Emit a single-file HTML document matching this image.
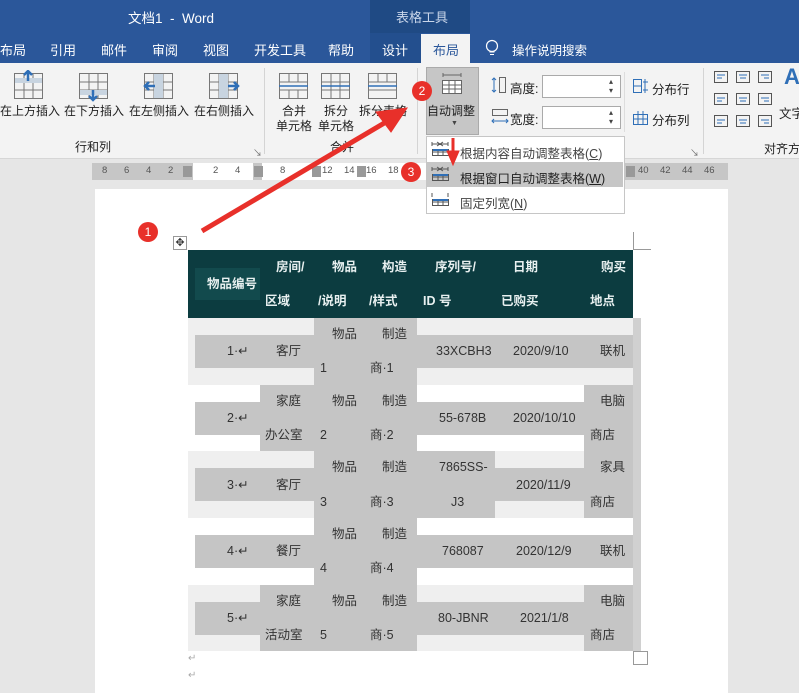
<!DOCTYPE html>
<html><head><meta charset="utf-8"><style>
*{margin:0;padding:0;box-sizing:border-box}
body{width:799px;height:693px;overflow:hidden;position:relative;background:#e6e6e6;font-family:"Liberation Sans","Noto Sans CJK SC",sans-serif;font-size:12px;color:#333}
.a{position:absolute;white-space:nowrap}
.t{font-size:12.5px;color:#333;line-height:16px}
.h{color:#e8f0f0;font-weight:bold;font-size:12.5px;line-height:16px}
.g{background:#c5c5c5}
.w{color:#fff;font-size:13px}
.rb{font-size:12px;color:#222;line-height:15px;text-align:center}
.badge{position:absolute;width:20px;height:20px;border-radius:50%;background:#e8302a;color:#fff;font-size:12px;text-align:center;line-height:20px}
</style></head><body>
<!-- title bar -->
<div class="a" style="left:0;top:0;width:799px;height:63px;background:#2b579a"></div>
<div class="a" style="left:370px;top:0;width:100px;height:33px;background:#1f4a84"></div>
<div class="a w" style="left:128px;top:7px;font-size:13.5px">文档1 &nbsp;-&nbsp; Word</div>
<div class="a w" style="left:396px;top:7px;color:#c9d6ea">表格工具</div>
<div class="a w" style="left:0;top:40px">布局</div>
<div class="a w" style="left:50px;top:40px">引用</div>
<div class="a w" style="left:101px;top:40px">邮件</div>
<div class="a w" style="left:152px;top:40px">审阅</div>
<div class="a w" style="left:203px;top:40px">视图</div>
<div class="a w" style="left:254px;top:40px">开发工具</div>
<div class="a w" style="left:328px;top:40px">帮助</div>
<div class="a" style="left:370px;top:33px;width:51px;height:30px;background:#234f8e"></div>
<div class="a w" style="left:382px;top:40px">设计</div>
<div class="a" style="left:421px;top:34px;width:49px;height:30px;background:#f3f3f3"></div>
<div class="a" style="left:433px;top:40px;color:#2b579a;font-size:13px">布局</div>
<svg class="a" style="left:485px;top:39px" width="14" height="18"><circle cx="7" cy="7" r="5.5" fill="none" stroke="#fff" stroke-width="1.2"/><path d="M4.5 13h5M5 15.5h4" stroke="#fff"/></svg>
<div class="a w" style="left:512px;top:40px;font-size:12.5px">操作说明搜索</div>
<!-- ribbon -->
<div class="a" style="left:0;top:63px;width:799px;height:96px;background:#f3f3f3;border-bottom:1px solid #d6d6d6"></div>
<svg class="a" style="left:0;top:70px" width="799" height="60">
<g fill="none" stroke="#777" stroke-width="1">
<rect x="14.5" y="3.5" width="28" height="25"/><rect x="79.5" y="3.5" width="28" height="25"/><rect x="144.5" y="3.5" width="28" height="25"/><rect x="209.5" y="3.5" width="28" height="25"/>
<path d="M14 12h29M14 20h29M24 4v25M33 4v25M79 12h29M79 20h29M89 4v25M98 4v25M144 12h29M144 20h29M154 4v25M163 4v25M209 12h29M209 20h29M219 4v25M228 4v25"/>
<rect x="279.5" y="3.5" width="28" height="25"/><rect x="321.5" y="3.5" width="28" height="25"/><rect x="368.5" y="3.5" width="28" height="25"/>
<path d="M279 12h29M279 20h29M289 4v8M298 4v8M289 20v9M298 20v9M321 12h29M321 20h29M331 4v25M340 4v25M368 12h29M368 20h29M378 4v8M387 4v8"/>
</g>
<rect x="15" y="8" width="27" height="5" fill="#c8d4e0"/><rect x="80" y="20" width="27" height="5" fill="#c8d4e0"/><rect x="154" y="4" width="9" height="24" fill="#c8d4e0"/><rect x="219" y="4" width="9" height="24" fill="#c8d4e0"/>
<path d="M28 1v10M24 5l4-4 4 4" stroke="#2f6fb7" stroke-width="2.5" fill="none"/><path d="M93 20v10M89 26l4 4 4-4" stroke="#2f6fb7" stroke-width="2.5" fill="none"/>
<path d="M145 16h10M149 12l-4 4 4 4" stroke="#2f6fb7" stroke-width="2.5" fill="none"/><path d="M228 16h10M234 12l4 4-4 4" stroke="#2f6fb7" stroke-width="2.5" fill="none"/>
<path d="M279 16h29M321 16h29M368 16h29" stroke="#2f6fb7" stroke-width="1.5"/>
</svg>
<div class="a rb" style="left:0;top:104px">在上方插入</div>
<div class="a rb" style="left:64px;top:104px">在下方插入</div>
<div class="a rb" style="left:129px;top:104px">在左侧插入</div>
<div class="a rb" style="left:194px;top:104px">在右侧插入</div>
<div class="a rb" style="left:276px;top:104px">合并<br>单元格</div>
<div class="a rb" style="left:318px;top:104px">拆分<br>单元格</div>
<div class="a rb" style="left:359px;top:104px">拆分表格</div>
<div class="a rb" style="left:75px;top:140px">行和列</div>
<div class="a rb" style="left:330px;top:140px">合并</div>
<div class="a" style="left:253px;top:146px;font-size:9px;color:#666">↘</div>
<div class="a" style="left:264px;top:68px;width:1px;height:86px;background:#d4d4d4"></div>
<div class="a" style="left:417px;top:68px;width:1px;height:86px;background:#d4d4d4"></div>
<div class="a" style="left:426px;top:67px;width:53px;height:68px;background:#c6c6c6;border:1px solid #aaa"></div>
<svg class="a" style="left:441px;top:72px" width="22" height="24"><rect x="1.5" y="8.5" width="19" height="13" fill="#fff" stroke="#666"/><path d="M1 13h20M1 17h20M8 9v13M14 9v13M2 3h18M2 1v4M20 1v4" stroke="#666" fill="none"/></svg>
<div class="a rb" style="left:427px;top:104px">自动调整</div>
<div class="a" style="left:451px;top:120px;font-size:7px;color:#444">▼</div>
<svg class="a" style="left:491px;top:76px" width="18" height="18"><path d="M3 2v14M1 4l2-2 2 2M1 14l2 2 2-2" stroke="#2f6fb7" fill="none"/><rect x="8.5" y="1.5" width="6" height="15" fill="none" stroke="#666"/></svg>
<svg class="a" style="left:491px;top:108px" width="18" height="18"><rect x="1.5" y="1.5" width="15" height="6" fill="none" stroke="#666"/><path d="M1 13h16M3 11l-2 2 2 2M15 11l2 2-2 2" stroke="#2f6fb7" fill="none"/></svg>
<div class="a" style="left:510px;top:78px;font-size:12.5px;color:#222">高度:</div>
<div class="a" style="left:510px;top:109px;font-size:12.5px;color:#222">宽度:</div>
<div class="a" style="left:542px;top:75px;width:79px;height:23px;background:#fff;border:1px solid #aaa"></div>
<div class="a" style="left:542px;top:106px;width:79px;height:23px;background:#fff;border:1px solid #aaa"></div>
<div class="a" style="left:609px;top:77px;font-size:8px;line-height:9px;color:#444">▴<br>▾</div>
<div class="a" style="left:609px;top:108px;font-size:8px;line-height:9px;color:#444">▴<br>▾</div>
<div class="a" style="left:624px;top:72px;width:1px;height:60px;background:#ddd"></div>
<svg class="a" style="left:632px;top:78px" width="18" height="16"><path d="M1.5 1.5h8v13h-8zM1 8h9M13 1v14M11 4h5M11 12h5" stroke="#2f6fb7" fill="none"/></svg>
<svg class="a" style="left:632px;top:110px" width="18" height="16"><path d="M1.5 4.5h14v10h-14zM1 9h15M6 1v14M11 1v14" stroke="#2f6fb7" fill="none"/></svg>
<div class="a" style="left:652px;top:79px;font-size:12.5px;color:#222">分布行</div>
<div class="a" style="left:652px;top:110px;font-size:12.5px;color:#222">分布列</div>
<div class="a" style="left:690px;top:146px;font-size:9px;color:#666">↘</div>
<div class="a" style="left:703px;top:68px;width:1px;height:86px;background:#d4d4d4"></div>
<svg class="a" style="left:713px;top:70px" width="60" height="62"><g fill="none" stroke="#555"><rect x="1.5" y="1.5" width="13" height="11"/><rect x="23.5" y="1.5" width="13" height="11"/><rect x="45.5" y="1.5" width="13" height="11"/><rect x="1.5" y="23.5" width="13" height="11"/><rect x="23.5" y="23.5" width="13" height="11"/><rect x="45.5" y="23.5" width="13" height="11"/><rect x="1.5" y="45.5" width="13" height="11"/><rect x="23.5" y="45.5" width="13" height="11"/><rect x="45.5" y="45.5" width="13" height="11"/></g>
<g stroke="#2f6fb7"><path d="M4 5h8M4 8h5M26 5h8M27 8h6M48 5h8M51 8h5M4 28h8M4 31h5M26 28h8M27 31h6M48 28h8M51 31h5M4 50h8M4 53h5M26 50h8M27 53h6M48 50h8M51 53h5"/></g></svg>
<div class="a" style="left:784px;top:64px;font-size:22px;color:#2f6fb7;font-weight:bold">A</div>
<div class="a" style="left:779px;top:103px;font-size:12.5px;color:#222">文字</div>
<div class="a" style="left:764px;top:140px;font-size:12px;color:#222">对齐方</div>
<!-- ruler -->
<div class="a" style="left:92px;top:163px;width:636px;height:17px;background:#c6c6c6"></div>
<div class="a" style="left:193px;top:163px;width:60px;height:17px;background:#fff"></div>
<div class="a" style="left:262px;top:163px;width:360px;height:17px;background:#fff"></div>
<div class="a" style="left:92px;top:165px;font-size:9.5px;color:#555;word-spacing:0">
<span style="position:absolute;left:10px">8</span><span style="position:absolute;left:32px">6</span><span style="position:absolute;left:54px">4</span><span style="position:absolute;left:76px">2</span><span style="position:absolute;left:121px">2</span><span style="position:absolute;left:143px">4</span><span style="position:absolute;left:188px">8</span><span style="position:absolute;left:230px">12</span><span style="position:absolute;left:252px">14</span><span style="position:absolute;left:274px">16</span><span style="position:absolute;left:296px">18</span><span style="position:absolute;left:546px">40</span><span style="position:absolute;left:568px">42</span><span style="position:absolute;left:590px">44</span><span style="position:absolute;left:612px">46</span></div>
<div class="a" style="left:183px;top:166px;width:9px;height:11px;background:#999"></div>
<div class="a" style="left:254px;top:166px;width:9px;height:11px;background:#999"></div>
<div class="a" style="left:312px;top:166px;width:9px;height:11px;background:#999"></div>
<div class="a" style="left:357px;top:166px;width:9px;height:11px;background:#999"></div>
<div class="a" style="left:626px;top:166px;width:9px;height:11px;background:#999"></div>
<!-- page -->
<div class="a" style="left:95px;top:189px;width:633px;height:504px;background:#fff"></div>
<div class="a" style="left:173px;top:236px;width:14px;height:14px;border:1px solid #999;background:#fff;font-size:11px;line-height:12px;text-align:center;color:#333">✥</div>
<div class="a" style="left:633px;top:232px;width:1px;height:18px;background:#999"></div>
<div class="a" style="left:633px;top:249px;width:18px;height:1px;background:#999"></div>
<!-- header -->
<div class="a" style="left:188px;top:250px;width:445px;height:68px;background:#0c3c40"></div>
<div class="a" style="left:195px;top:268px;width:65px;height:32px;background:#124a4d"></div>
<div class="a h" style="left:207px;top:276px">物品编号</div>
<div class="a h" style="left:276px;top:259px">房间/</div><div class="a h" style="left:265px;top:293px">区域</div>
<div class="a h" style="left:332px;top:259px">物品</div><div class="a h" style="left:318px;top:293px">/说明</div>
<div class="a h" style="left:382px;top:259px">构造</div><div class="a h" style="left:369px;top:293px">/样式</div>
<div class="a h" style="left:435px;top:259px">序列号/</div><div class="a h" style="left:423px;top:293px">ID 号</div>
<div class="a h" style="left:513px;top:259px">日期</div><div class="a h" style="left:501px;top:293px">已购买</div>
<div class="a h" style="left:601px;top:259px">购买</div><div class="a h" style="left:590px;top:293px">地点</div>
<!-- rows backgrounds -->
<div class="a" style="left:188px;top:318px;width:445px;height:67px;background:#efefef"></div>
<div class="a" style="left:188px;top:451px;width:445px;height:67px;background:#efefef"></div>
<div class="a" style="left:188px;top:585px;width:445px;height:66px;background:#efefef"></div>
<!-- bands -->
<div class="a g" style="left:195px;top:335px;width:438px;height:33px"></div>
<div class="a g" style="left:195px;top:402px;width:438px;height:33px"></div>
<div class="a g" style="left:195px;top:468px;width:438px;height:33px"></div>
<div class="a g" style="left:195px;top:535px;width:438px;height:33px"></div>
<div class="a g" style="left:195px;top:602px;width:438px;height:33px"></div>
<!-- full cells -->
<div class="a g" style="left:314px;top:318px;width:103px;height:333px"></div>
<div class="a g" style="left:260px;top:385px;width:54px;height:66px"></div>
<div class="a g" style="left:584px;top:385px;width:49px;height:66px"></div>
<div class="a g" style="left:417px;top:451px;width:78px;height:67px"></div>
<div class="a g" style="left:584px;top:451px;width:49px;height:67px"></div>
<div class="a g" style="left:260px;top:585px;width:54px;height:66px"></div>
<div class="a g" style="left:584px;top:585px;width:49px;height:66px"></div>
<div class="a" style="left:633px;top:318px;width:8px;height:333px;background:#d0d0d0"></div>
<!-- row text -->
<div class="a t" style="left:227px;top:343px">1·↵</div><div class="a t" style="left:276px;top:343px">客厅</div><div class="a t" style="left:332px;top:326px">物品</div><div class="a t" style="left:320px;top:360px">1</div><div class="a t" style="left:382px;top:326px">制造</div><div class="a t" style="left:370px;top:360px">商·1</div><div class="a t" style="left:436px;top:343px">33XCBH3</div><div class="a t" style="left:513px;top:343px">2020/9/10</div><div class="a t" style="left:600px;top:343px">联机</div>
<div class="a t" style="left:227px;top:410px">2·↵</div><div class="a t" style="left:276px;top:393px">家庭</div><div class="a t" style="left:265px;top:427px">办公室</div><div class="a t" style="left:332px;top:393px">物品</div><div class="a t" style="left:320px;top:427px">2</div><div class="a t" style="left:382px;top:393px">制造</div><div class="a t" style="left:370px;top:427px">商·2</div><div class="a t" style="left:439px;top:410px">55-678B</div><div class="a t" style="left:513px;top:410px">2020/10/10</div><div class="a t" style="left:600px;top:393px">电脑</div><div class="a t" style="left:590px;top:427px">商店</div>
<div class="a t" style="left:227px;top:477px">3·↵</div><div class="a t" style="left:276px;top:477px">客厅</div><div class="a t" style="left:332px;top:459px">物品</div><div class="a t" style="left:320px;top:494px">3</div><div class="a t" style="left:382px;top:459px">制造</div><div class="a t" style="left:370px;top:494px">商·3</div><div class="a t" style="left:439px;top:459px">7865SS-</div><div class="a t" style="left:451px;top:494px">J3</div><div class="a t" style="left:516px;top:477px">2020/11/9</div><div class="a t" style="left:600px;top:459px">家具</div><div class="a t" style="left:590px;top:494px">商店</div>
<div class="a t" style="left:227px;top:543px">4·↵</div><div class="a t" style="left:276px;top:543px">餐厅</div><div class="a t" style="left:332px;top:526px">物品</div><div class="a t" style="left:320px;top:560px">4</div><div class="a t" style="left:382px;top:526px">制造</div><div class="a t" style="left:370px;top:560px">商·4</div><div class="a t" style="left:442px;top:543px">768087</div><div class="a t" style="left:516px;top:543px">2020/12/9</div><div class="a t" style="left:600px;top:543px">联机</div>
<div class="a t" style="left:227px;top:610px">5·↵</div><div class="a t" style="left:276px;top:593px">家庭</div><div class="a t" style="left:265px;top:627px">活动室</div><div class="a t" style="left:332px;top:593px">物品</div><div class="a t" style="left:320px;top:627px">5</div><div class="a t" style="left:382px;top:593px">制造</div><div class="a t" style="left:370px;top:627px">商·5</div><div class="a t" style="left:438px;top:610px">80-JBNR</div><div class="a t" style="left:520px;top:610px">2021/1/8</div><div class="a t" style="left:600px;top:593px">电脑</div><div class="a t" style="left:590px;top:627px">商店</div>
<div class="a" style="left:188px;top:653px;font-size:10px;color:#aaa">↵</div>
<div class="a" style="left:188px;top:670px;font-size:10px;color:#aaa">↵</div>
<div class="a" style="left:633px;top:651px;width:15px;height:14px;border:1px solid #999;background:#fff"></div>
<!-- dropdown -->
<div class="a" style="left:426px;top:136px;width:199px;height:78px;background:#fff;border:1px solid #c6c6c6"></div>
<div class="a" style="left:427px;top:162px;width:196px;height:25px;background:#c6c6c6"></div>
<svg class="a" style="left:431px;top:141px" width="20" height="70"><g fill="none" stroke="#555"><path d="M1 3h16M1 1v4M17 1v4M6 1l6 4M12 1l-6 4"/><rect x="1.5" y="8.5" width="16" height="6"/><path d="M1 11h17M7 9v6M12 9v6"/>
<path d="M1 28h16M1 26v4M17 26v4M6 26l6 4M12 26l-6 4"/><rect x="1.5" y="33.5" width="16" height="6"/><path d="M1 36h17M7 34v6M12 34v6"/>
<path d="M1 52v4M17 52v4"/><rect x="1.5" y="58.5" width="16" height="6"/><path d="M1 61h17M7 59v6M12 59v6"/></g><path d="M2 9h15M2 34h15M2 59h15" stroke="#2f6fb7" stroke-width="2"/></svg>
<div class="a" style="left:460px;top:143px;font-size:12.5px;color:#444">根据内容自动调整表格(<u>C</u>)</div>
<div class="a" style="left:460px;top:168px;font-size:12.5px;color:#222">根据窗口自动调整表格(<u>W</u>)</div>
<div class="a" style="left:460px;top:193px;font-size:12.5px;color:#444">固定列宽(<u>N</u>)</div>
<!-- arrows -->
<svg class="a" style="left:0;top:0" width="799" height="693">
<g fill="#e8302a" stroke="#e8302a">
<path d="M202 231L386 122" stroke-width="5"/><path d="M407 108L376 112L391 132Z"/>
<path d="M453 138L453 153" stroke-width="3"/><path d="M447 151L453 165L459 151Z"/>
</g></svg>
<div class="badge" style="left:138px;top:222px">1</div>
<div class="badge" style="left:412px;top:81px">2</div>
<div class="badge" style="left:401px;top:162px">3</div>
</body></html>
